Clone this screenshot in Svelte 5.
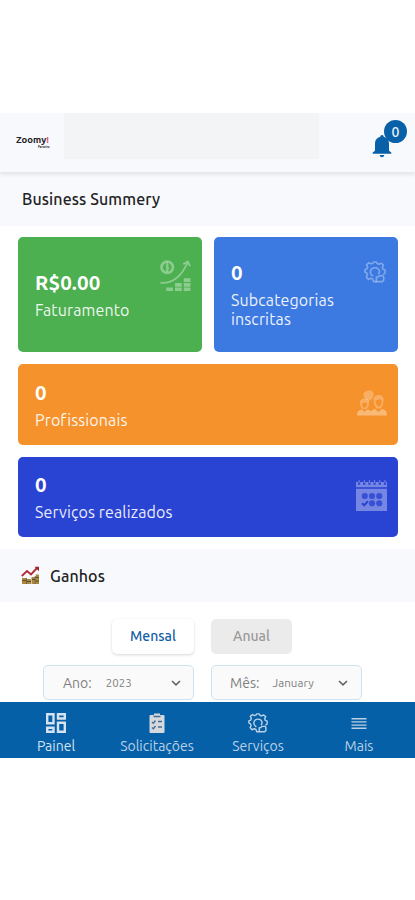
<script>
	let period = $state('mensal');
</script>

{#snippet gear()}
	<svg class="gear" viewBox="0 0 24 24" fill="none" stroke="currentColor" stroke-width="1.700" stroke-linejoin="round" stroke-linecap="round">
		<path d="M13 22.500h-2.500l-1-2.800-2-.8-2.700 1.200-2.300-2.600 1.300-2.500-.8-1.900L1 12V9.500l2.300-1 .7-2-1.200-2.600 2.400-2 2.600 1.200 1.900-.8L10.600 1h2.800l.9 1.700 2 .8 2.500-1.100 2.400 2-1.200 2.600.8 1.900 2.200.9V13l-1.500 1.500" />
		<path d="M9.500 16.200c-2-1-2.800-3-2.400-5 .5-2.300 2.500-3.900 4.900-3.900s4.500 1.800 4.900 4.200l-.8 2.500" />
		<path d="M13.500 17.500h2l1.500-1.500h3.500l1 1.500v3.500l-1.500 1.500h-6.500z" />
	</svg>
{/snippet}

{#snippet chevron()}
	<svg class="chevron" viewBox="0 0 10 6" fill="none" stroke="#666" stroke-width="1.700">
		<path d="M1 1l4 3.800L9 1" />
	</svg>
{/snippet}

<div class="app">
	<header>
		<div class="logo">Zoomy<span>!</span><small>Parceiro</small></div>
		<div class="placeholder"></div>
		<div class="bell">
			<svg viewBox="0 0 20 24" fill="#0861a8">
				<path d="M10 1c1.200 0 1.700.8 1.700 1.800 3.500.8 5.300 3.300 5.300 6.700v7.300l2.300 1.700v1.300H.7v-1.300L3 16.800V9.500c0-3.400 1.800-5.900 5.300-6.700C8.300 1.800 8.800 1 10 1zM7.800 21h4.400c0 1.300-.9 2.200-2.200 2.200S7.800 22.300 7.800 21z" />
			</svg>
			<span class="badge">0</span>
		</div>
	</header>

	<h2 class="band first">Business Summery</h2>

	<section class="cards">
		<div class="card green">
			<div>
				<strong>R$0.00</strong>
				<p>Faturamento</p>
			</div>
			<svg class="icon-growth" viewBox="0 0 30 30" fill="none" stroke="currentColor">
				<circle cx="7" cy="7" r="5.500" stroke-width="2.600" />
				<path d="M7 2.500v9M8.500 5H6.300v2h1.600v2.300H5.500" stroke-width="1.300" />
				<path d="M.5 22C12 23 21 15 26.500 3M22.500 4L27 1.500l2 4.500" stroke-width="1.800" />
				<path d="M6 28.500h6.500M14.500 28.500H21M23 28.500h6.500M14.500 24H21M23 24h6.500M23 19.500h6.500" stroke-width="3.600" />
			</svg>
		</div>
		<div class="card sky">
			<div>
				<strong>0</strong>
				<p>Subcategorias<br />inscritas</p>
			</div>
			<div class="icon-gear">{@render gear()}</div>
		</div>
		<div class="card wide orange">
			<div>
				<strong>0</strong>
				<p>Profissionais</p>
			</div>
			<svg class="icon-people" viewBox="0 0 30 26" fill="currentColor">
				<path d="M6.500 6C6 2.500 9 .5 12 .5c3.500 0 5 2 4.600 4.500L15 9l-3 2-3-1.500z" opacity=".75" />
				<path d="M0 25.500c0-4 2-5.500 5-6l2.500 2.500 2.500-2.500c2 .3 3.300 1 4 2 1-1.500 2.500-2.200 4-2.500l3.500 3 3.500-3c3.500.5 5 2.500 5 6.500z" />
				<path d="M2.800 12.500C2.800 9.500 5 8.500 7.500 8.500s4.700 1 4.700 4l-.7 4-2 2.500h-4l-2-2.500zM16.500 10c0-3.500 2-5 5-5s5.200 1.500 5.200 5l-.9 5-2.300 3.500h-4L17.300 15z" opacity=".75" />
				<path d="M5 13.500l3-1 2 1-.5 3-2 1.500-2-1.500zM18.500 10.500l4.500-1.500 1.800 1.800-.6 4-2.500 2-2.400-2z" fill="#f6922b" />
			</svg>
		</div>
		<div class="card wide indigo">
			<div>
				<strong>0</strong>
				<p>Serviços realizados</p>
			</div>
			<svg class="icon-calendar" viewBox="0 0 30 30" fill="currentColor">
				<path d="M0 2h2v2.500h2V2h3v2.500h2V2h3v2.500h2V2h3v2.500h2V2h3v2.500h2V2h3v2.500h2V2h1v5H0zM0 8.500h30V30H0z" />
				<path d="M3 0v3M8 0v3M13 0v3M18 0v3M23 0v3M28 0v3" stroke="currentColor" />
				<g fill="#2943d3" opacity=".8">
					<circle cx="8.500" cy="15.500" r="3" />
					<circle cx="15.500" cy="15.500" r="3" />
					<circle cx="22.500" cy="15.500" r="3" />
					<circle cx="15.500" cy="22.500" r="3" />
					<circle cx="22.500" cy="22.500" r="3" />
				</g>
				<path d="M5.800 22.500L8 24.500l3.500-4" fill="none" stroke="#2943d3" stroke-width="2" />
			</svg>
		</div>
	</section>

	<h2 class="band">
		<svg class="icon-earn" viewBox="0 0 19 19">
			<g fill="#a98a3c">
				<path d="M1 12h4v6H1zM6 13h4v5H6zM10.500 11h3.500v7h-3.500zM14.700 8.500H18V18h-3.300z" />
			</g>
			<path d="M1 14.500h4M6 15.500h4M11 13.500h3M15 11.500h3M15 15h3M5.500 12v6M14.300 10v8" stroke="#4e3a22" stroke-width=".8" />
			<path d="M.8 10L6 5l4 3.500 6.500-7" fill="none" stroke="#b22c35" stroke-width="1.900" />
			<path d="M13.500.8h4.500v4.500z" fill="#9b2530" />
		</svg>
		<span>Ganhos</span>
	</h2>

	<div class="tabs">
		<button class:active={period === 'mensal'} onclick={() => (period = 'mensal')}>Mensal</button>
		<button class:active={period === 'anual'} onclick={() => (period = 'anual')}>Anual</button>
	</div>

	<div class="filters">
		<div class="select">Ano:<span>2023</span>{@render chevron()}</div>
		<div class="select month">Mês:<span>January</span>{@render chevron()}</div>
	</div>

	<nav>
		<div class="item on">
			<svg viewBox="0 0 20 20" fill="none" stroke="currentColor" stroke-width="2.400">
				<path d="M1.200 1.200h6.300v9H1.200zM12 1.200h6.800v4.300H12zM1.200 14.700h6.300v4H1.200zM12 9.700h6.800v9H12z" />
			</svg>
			<span>Painel</span>
		</div>
		<div class="item">
			<svg viewBox="0 0 20 20">
				<path d="M3.500 2H7V.5h6V2h3.500q1 0 1 1v16q0 1-1 1h-13q-1 0-1-1V3q0-1 1-1z" fill="#d5d8dc" />
				<path d="M6.500 3.500h7M5 9l1.300 1.200L8.500 7.500M5 14.500l1.300 1.200L8.500 13M11 8.500h4M11 14h4" fill="none" stroke="#426e98" stroke-width="1.300" />
			</svg>
			<span>Solicitações</span>
		</div>
		<div class="item">
			{@render gear()}
			<span>Serviços</span>
		</div>
		<div class="item">
			<svg viewBox="0 0 20 20" fill="none" stroke="currentColor" stroke-width="1.400">
				<path d="M2.500 5.700h15M2.500 8.900h15M2.500 12.100h15M2.500 15.300h15" />
			</svg>
			<span>Mais</span>
		</div>
	</nav>
</div>

<style>
	:global(body) {
		background: #fff;
	}

	.app {
		width: 415px;
		height: 900px;
		padding-top: 113px;
		box-sizing: border-box;
		overflow: hidden;
		font-family: Ubuntu, 'Noto Sans', sans-serif;
		color: #222;
	}

	.app span,
	.app p {
		white-space: nowrap;
	}

	header {
		position: relative;
		display: flex;
		height: 59px;
		background: #f8f9fd;
		box-shadow: 0 3px 3px rgba(0, 0, 0, 0.07);
	}

	.logo {
		width: 48px;
		padding: 20px 0 0 16px;
		flex: none;
		font-size: 9.500px;
		font-weight: 700;
		line-height: 13px;
	}

	.logo span {
		color: #df5070;
	}

	.logo small {
		display: block;
		padding-left: 22px;
		font-size: 3px;
		line-height: 2px;
	}

	.placeholder {
		width: 255px;
		height: 46px;
		background: #f3f4f5;
	}

	.bell {
		position: relative;
		margin: 21px 0 0 53px;
	}

	.bell svg {
		display: block;
		width: 20px;
		height: 24px;
	}

	.badge {
		position: absolute;
		left: 12px;
		top: -14px;
		width: 23px;
		height: 23px;
		border-radius: 50%;
		background: #0861a8;
		color: #e8f1fa;
		font-size: 14px;
		font-weight: 500;
		line-height: 24px;
		text-align: center;
	}

	.band {
		display: flex;
		align-items: center;
		height: 53px;
		margin: 0;
		padding-left: 21px;
		background: #f8f9fd;
		font-size: 16px;
		font-weight: 500;
		letter-spacing: 0.1px;
	}

	.first {
		height: 54px;
		padding-left: 22px;
	}

	.cards {
		display: grid;
		grid-template-columns: 184px 184px;
		grid-template-rows: 115px 81px 80px;
		gap: 12px;
		padding: 11px 18px 12px;
	}

	.card {
		display: flex;
		align-items: center;
		justify-content: space-between;
		padding: 0 11px 0 17px;
		border-radius: 5px;
		color: #fff;
	}

	.wide {
		grid-column: span 2;
	}

	.green {
		background: #4caf50;
	}

	.sky {
		background: #3c79e1;
	}

	.orange {
		background: #f6922b;
	}

	.indigo {
		background: #2943d3;
	}

	.card strong {
		display: block;
		font-size: 20.500px;
		line-height: 26px;
		letter-spacing: 0.1px;
	}

	.card p {
		margin: 5px 0 0;
		font-size: 16px;
		line-height: 19px;
		letter-spacing: 0.13px;
		opacity: 0.9;
	}

	.card svg {
		display: block;
		color: rgba(255, 255, 255, 0.36);
	}

	.icon-growth {
		width: 31px;
		height: 31px;
		margin-bottom: 38px;
	}

	.icon-gear {
		margin: 0 1px 46px 0;
	}

	.gear {
		width: 22px;
		height: 22px;
	}

	.icon-people {
		width: 30px;
		height: 26px;
		margin-top: -3px;
	}

	.icon-calendar {
		width: 31px;
		height: 31px;
		margin-top: -4px;
	}

	.icon-earn {
		width: 19px;
		height: 19px;
		margin-right: 10px;
	}

	.tabs {
		display: flex;
		gap: 17px;
		padding: 17px 0 0 112px;
	}

	button {
		width: 81px;
		height: 35px;
		padding: 0;
		border: 0;
		border-radius: 5px;
		background: #ebebeb;
		color: #999;
		font: 500 14px/35px Ubuntu, 'Noto Sans', sans-serif;
	}

	.active {
		width: 82px;
		background: #fff;
		color: #1260a4;
		box-shadow: 0 1px 3px rgba(0, 0, 0, 0.16);
	}

	.filters {
		display: flex;
		gap: 17px;
		padding: 11px 0 2px 43px;
	}

	.select {
		display: flex;
		align-items: center;
		box-sizing: border-box;
		width: 151px;
		height: 35px;
		padding: 0 12px 0 19px;
		border: 1px solid #cfe2f0;
		border-radius: 5px;
		background: #fafafa;
		color: #808080;
		font-size: 14px;
	}

	.select span {
		margin-left: 14px;
		font-size: 11.500px;
	}

	.month {
		padding: 0 13px 0 18px;
	}

	.month span {
		margin-left: 13px;
		letter-spacing: 0.1px;
	}

	.chevron {
		width: 10px;
		height: 6px;
		margin-left: auto;
	}

	nav {
		display: grid;
		grid-template-columns: repeat(4, 101px);
		height: 56px;
		padding-left: 5.500px;
		background: #0560a8;
		color: #b9d0e5;
	}

	.item {
		display: flex;
		flex-direction: column;
		align-items: center;
		padding-top: 11px;
		font-size: 14px;
		line-height: 18px;
	}

	.item svg,
	.item .gear {
		display: block;
		width: 20px;
		height: 20px;
		margin-bottom: 4px;
	}

	.on {
		color: #d5e2ef;
	}
</style>
